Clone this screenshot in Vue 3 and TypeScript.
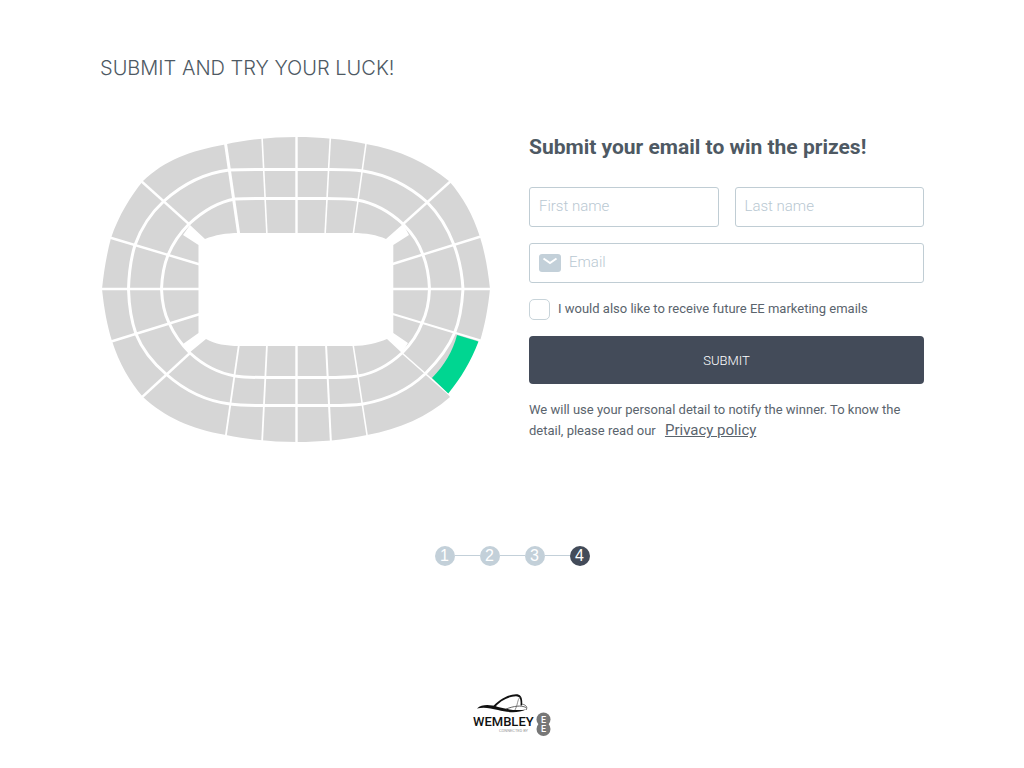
<script setup lang="ts">
import { ref } from 'vue'

interface Line {
  from: [number, number]
  to: [number, number]
  width: number
}

const firstName = ref('')
const lastName = ref('')
const email = ref('')
const marketing = ref(false)

const steps = [1, 2, 3, 4]
const current = 4

const aisles: Line[] = [
  { from: [296.5, 134], to: [296.5, 445], width: 2.4 },
  { from: [100, 289], to: [494, 289], width: 2.4 },
  { from: [225, 140], to: [239, 236], width: 3 },
  { from: [262, 136], to: [267, 236], width: 1.6 },
  { from: [330.4, 136], to: [325, 236], width: 1.6 },
  { from: [366.5, 140], to: [353, 236], width: 1.6 },
  { from: [225.5, 438], to: [239, 344], width: 1.8 },
  { from: [262, 444], to: [267, 344], width: 1.8 },
  { from: [331, 444], to: [326, 344], width: 2 },
  { from: [367.5, 438], to: [353, 344], width: 1.6 },
  { from: [140, 180], to: [190, 225], width: 2.4 },
  { from: [108, 237], to: [200, 264.5], width: 2.4 },
  { from: [452, 180], to: [402, 225], width: 2.4 },
  { from: [484, 235.5], to: [391, 264.5], width: 2.4 },
  { from: [140, 399], to: [190, 353], width: 2.4 },
  { from: [108, 342.5], to: [200, 314], width: 2.4 },
  { from: [453, 398], to: [402, 353], width: 1.6 },
  { from: [484, 341.5], to: [391, 313.5], width: 2 },
]
</script>

<template>
  <main class="page">
    <h1 class="title">SUBMIT AND TRY YOUR LUCK!</h1>

    <div class="content">
      <svg class="stadium" viewBox="100 136 395 307" role="img" aria-label="Stadium seating map">
        <path
          fill="#d6d6d6"
          d="M102 289C104 270 107 253 111 238C119 215 130 197 143 181C165 160 190 151 225 144.500C250 139 275 137 297 137C320 137 343 139 366 144C400 150 427 163 449 181C463 197 473 215 480 237C485 253 488 270 490 289C488 308 485 325 480 341L477 341C470 361 460 378 447 393L450 397C427 417 400 429 367 435C343 440 320 442 297 442C275 442 250 440 226 435C190 429 165 417 143 397C130 382 119 363 112 341C107 325 104 308 102 289Z"
        />
        <path
          class="ring"
          d="M128.500 289C129 272 131 258 135 245C141 228 151 213 164 201C183 184 205 173 229 170C240 169.500 250 169.500 262 169.500H330C342 169.500 352 169.500 363 171C388 175 409 186 427 202C439 214 448 229 454 245C459 258 462 272 463 289C462 306 460 320 454.500 333C448 349 438 361 425 374C407 391 386 400 363 404C352 405.500 342 405.500 330 405.500H262C250 405.500 240 405.500 230 404C205 401 184 390 166 374C152 362 142 349 136 334C131 320 129 306 128.500 289Z"
        />
        <path
          class="ring"
          d="M161.500 289C162 276 164 265 168 255C173 243 180 233 189 224C203 211 218 202 235 199C245 198.500 255 198.500 267 198.500H325C338 198.500 347 198.500 357 200C374 203 390 212 403 224C412 233 419 243 423 255C427 265 429 276 429.500 289C429 302 427 313 422 323C418 334 411 344 402 353C389 365 375 373 358 376C347 377.500 338 377.500 325 377.500H267C255 377.500 245 377.500 235 376C218 373 203 365 190 353C181 344 174 334 169 323C164 313 162 302 161.500 289Z"
        />
        <line
          v-for="(a, i) in aisles"
          :key="i"
          :x1="a.from[0]"
          :y1="a.from[1]"
          :x2="a.to[0]"
          :y2="a.to[1]"
          :stroke-width="a.width"
          stroke="#fff"
        />
        <path
          fill="#fff"
          d="M239 233H353C366 233 377 235 386 239L403 224L409 235L393.300 245V333L408 343L402 353L387 339C377 343 366 346 353 346H239C226 346 215 344 206 339L189 353L183 344L198.500 333V245L183 235L190 225L205 239C215 235 226 233 239 233Z"
        />
        <path fill="#00d691" d="M457 335L478.500 341.500C471 361 461 378 448.300 393.500L432 378C444 366 453 351 457 335Z" />
      </svg>

      <form class="form" @submit.prevent>
        <h2 class="heading">Submit your email to win the prizes!</h2>
        <div class="names">
          <input v-model="firstName" class="field" type="text" placeholder="First name" aria-label="First name" />
          <input v-model="lastName" class="field" type="text" placeholder="Last name" aria-label="Last name" />
        </div>
        <label class="field email">
          <svg width="22" height="18" viewBox="0 0 22 18" aria-hidden="true">
            <rect width="22" height="18" rx="3" fill="#c3d0d9" />
            <path d="M4.500 4.500L11 9L17.500 4.500" fill="none" stroke="#fff" stroke-width="2" />
          </svg>
          <input v-model="email" type="email" placeholder="Email" aria-label="Email" />
        </label>
        <label class="consent">
          <input v-model="marketing" type="checkbox" />
          <span>I would also like to receive future EE marketing emails</span>
        </label>
        <button class="submit" type="submit">SUBMIT</button>
        <p class="note">
          We will use your personal detail to notify the winner. To know the detail, please read our
          <a href="#privacy">Privacy policy</a>
        </p>
      </form>
    </div>

    <ol class="steps">
      <li v-for="s in steps" :key="s" :class="{ active: s === current }">{{ s }}</li>
    </ol>

    <footer class="footer">
      <svg width="80" height="44" viewBox="0 0 80 44" role="img" aria-label="Wembley connected by EE">
        <path
          fill="#111"
          d="M5 15.500C10 11 18 11.500 26 14C34 16 43 18 54 16.500C46 20.500 35 19.500 26 17C18 14.800 11 13.800 5 15.500Z"
        />
        <path
          fill="#111"
          d="M20 14.500C26 7 36 1.500 44 1.200C49 1.200 51 5 50 12.500L48.500 12.500C49 6 48 3.500 44 3.200C36 3.500 28 8 22 15Z"
        />
        <path d="M48 4C45 7 46 12 43 17" fill="none" stroke="#777" stroke-width="0.8" />
        <path d="M50 11C54 12 56 14 54 17M34 16C42 13 49 12 54 14.500" fill="none" stroke="#555" stroke-width="0.9" />
        <text class="logo-name" x="1" y="33">WEMBLEY</text>
        <text class="logo-sub" x="27" y="39">CONNECTED BY</text>
        <circle cx="71.500" cy="26.500" r="7" fill="#777" />
        <circle cx="71.500" cy="36" r="7" fill="#777" />
        <text class="logo-ee" x="71.500" y="30">E</text>
        <text class="logo-ee" x="71.500" y="39">E</text>
      </svg>
    </footer>
  </main>
</template>

<style>
body {
  margin: 0;
  background: #fff;
}
</style>

<style scoped>
.page {
  padding: 54px 100px 32px;
  color: #4e5963;
  font-family: Roboto, sans-serif;
  box-sizing: border-box;
}
.page * {
  box-sizing: border-box;
}
.title {
  margin: 0;
  font-family: Inter, sans-serif;
  font-size: 20px;
  line-height: 28px;
  font-weight: 300;
}
.content {
  display: grid;
  grid-template-columns: 1fr 1fr;
  gap: 34px;
  align-items: start;
  margin-top: 54px;
}
.stadium {
  display: block;
  width: 100%;
}
.ring {
  fill: none;
  stroke: #fff;
  stroke-width: 3;
}
.form {
  display: flex;
  flex-direction: column;
  gap: 16px;
}
.heading {
  margin: 0 0 13px;
  font-size: 21px;
  line-height: 22px;
  font-weight: 700;
  white-space: nowrap;
}
.names {
  display: grid;
  grid-template-columns: 1fr 1fr;
  gap: 16px;
}
.field {
  width: 100%;
  height: 40px;
  padding: 0 9px 2px;
  border: 1px solid #c0cdd4;
  border-radius: 3px;
  background: #fff;
  color: #4e5963;
  font: 300 15px Roboto, sans-serif;
}
.email {
  display: flex;
  align-items: center;
  gap: 8px;
  padding-bottom: 0;
}
.email input {
  flex: 1;
  min-width: 0;
  padding: 0 0 2px;
  border: 0;
  outline: 0;
  background: transparent;
  color: inherit;
  font: inherit;
}
input::placeholder {
  color: #b9c8d2;
  opacity: 1;
}
.consent {
  display: flex;
  align-items: flex-start;
  gap: 8px;
  font-size: 13px;
  line-height: 20px;
}
.consent input {
  appearance: none;
  width: 21px;
  height: 21px;
  margin: 0;
  border: 1px solid #c8d4da;
  border-radius: 5px;
  background: #fff;
}
.consent input:checked {
  background: #434b59;
}
.submit {
  height: 48px;
  border: 0;
  border-radius: 4px;
  background: #434b59;
  color: #fff;
  font: 300 13px Roboto, sans-serif;
}
.note {
  margin: 0;
  font-size: 13px;
  line-height: 20px;
}
.note a {
  margin-left: 6px;
  color: inherit;
  font-size: 15px;
}
.consent,
.note {
  color: #5a646d;
}
.steps {
  display: flex;
  justify-content: center;
  gap: 25px;
  margin: 103px 0 0;
  padding: 0;
  list-style: none;
}
.steps li {
  position: relative;
  width: 20px;
  height: 20px;
  border-radius: 50%;
  background: #c3d0d9;
  color: #fff;
  font: 16px/19px "Liberation Sans", Arial, sans-serif;
  text-align: center;
}
.steps li + li::before {
  content: "";
  position: absolute;
  top: 9px;
  right: 100%;
  width: 25px;
  height: 1px;
  background: #c3d0d9;
}
.steps .active {
  background: #434b59;
}
.footer {
  display: flex;
  justify-content: center;
  margin-top: 127px;
}
.logo-name {
  fill: #111;
  font: 500 13px Roboto, sans-serif;
}
.logo-sub {
  fill: #999;
  font: 4px Roboto, sans-serif;
}
.logo-ee {
  fill: #fff;
  font: 500 9px Roboto, sans-serif;
  text-anchor: middle;
}
</style>
